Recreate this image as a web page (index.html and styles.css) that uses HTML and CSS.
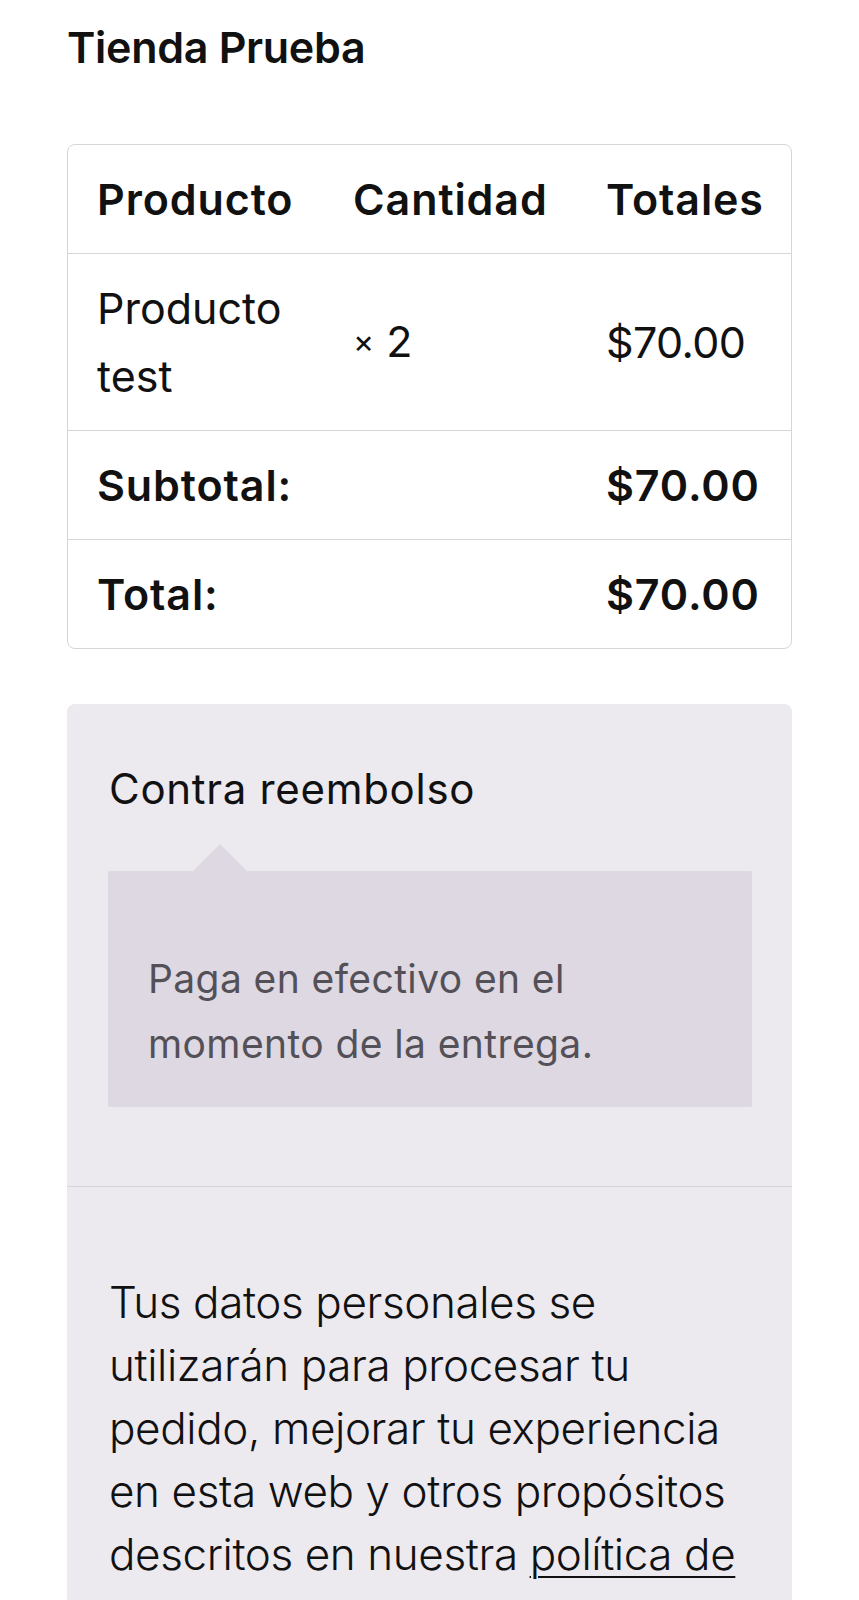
FILE: index.html
```html
<!DOCTYPE html>
<html>
<head>
    <title>Tienda Prueba - Finalizar compra</title>
    <link rel="stylesheet" href="styles.css">
</head>
<body>
    <div class="page">
        <h1 class="site-title">Tienda Prueba</h1>

        <table class="order-table">
            <colgroup>
                <col class="col-product">
                <col class="col-qty">
                <col class="col-total">
            </colgroup>
            <thead>
                <tr>
                    <th>Producto</th>
                    <th>Cantidad</th>
                    <th>Totales</th>
                </tr>
            </thead>
            <tbody>
                <tr class="cart-item">
                    <td>Producto test</td>
                    <td><span class="times">×</span> 2</td>
                    <td class="amount">$70.00</td>
                </tr>
            </tbody>
            <tfoot>
                <tr>
                    <th colspan="2">Subtotal:</th>
                    <th>$70.00</th>
                </tr>
                <tr>
                    <th colspan="2">Total:</th>
                    <th>$70.00</th>
                </tr>
            </tfoot>
        </table>

        <div class="payment">
            <div class="payment-methods">
                <div class="payment-label">Contra reembolso</div>
                <div class="payment-box">
                    <p>Paga en efectivo en el momento de la entrega.</p>
                </div>
            </div>
            <div class="place-order">
                <p class="privacy-text">Tus datos personales se utilizarán para procesar tu pedido, mejorar tu experiencia en esta web y otros propósitos descritos en nuestra <a href="#">política de privacidad</a>.</p>
            </div>
        </div>
    </div>
</body>
</html>
```

FILE: styles.css
```css
body {
    margin: 0;
    font-family: Inter, "Noto Sans", sans-serif;
    color: #111111;
    background-color: #ffffff;
}

.page {
    padding: 0 67px;
}

.site-title {
    font-size: 43px;
    font-weight: 600;
    line-height: 1.2;
    letter-spacing: -0.3px;
    margin: 22px 0 70px;
}

.order-table {
    width: 100%;
    table-layout: fixed;
    border-collapse: separate;
    border-spacing: 0;
    border: 1px solid #d6d6d6;
    border-radius: 8px;
    font-size: 43px;
    line-height: 68px;
}

.col-product {
    width: 256px;
}

.col-qty {
    width: 253px;
}

.order-table th,
.order-table td {
    padding: 20px 29px;
    text-align: left;
    vertical-align: middle;
    border-top: 1px solid #d6d6d6;
}

.order-table thead th {
    border-top: none;
}

.order-table th {
    font-weight: 600;
    letter-spacing: 0.9px;
}

.order-table td {
    font-weight: 400;
}

.order-table td.amount {
    letter-spacing: -0.6px;
}

.times {
    font-size: 32px;
    vertical-align: 4px;
}

.payment {
    margin-top: 55px;
    background-color: #ece9ef;
    border-radius: 8px;
}

.payment-methods {
    padding: 60px 40px 79px 41px;
}

.payment-label {
    font-size: 42px;
    line-height: 1.2;
    letter-spacing: 0.7px;
    padding-left: 1px;
    margin-bottom: 57px;
}

.payment-box {
    position: relative;
    background-color: #ddd8e1;
    border-radius: 2px;
    padding: 75px 40px 31px;
    color: #545058;
    font-size: 39px;
    line-height: 65px;
    letter-spacing: 0.4px;
}

.payment-box::before {
    content: "";
    position: absolute;
    top: -27px;
    left: 85px;
    border-left: 27px solid transparent;
    border-right: 27px solid transparent;
    border-bottom: 27px solid #ddd8e1;
}

.payment-box p {
    margin: 0;
}

.place-order {
    border-top: 1px solid #d9d5dc;
    padding: 84px 40px 80px 42px;
}

.privacy-text {
    margin: 0;
    font-size: 44px;
    line-height: 63px;
    font-weight: 300;
    letter-spacing: -0.4px;
}

.privacy-text a {
    color: inherit;
    text-decoration: underline;
    text-underline-offset: 6px;
    text-decoration-thickness: 2px;
}
```
